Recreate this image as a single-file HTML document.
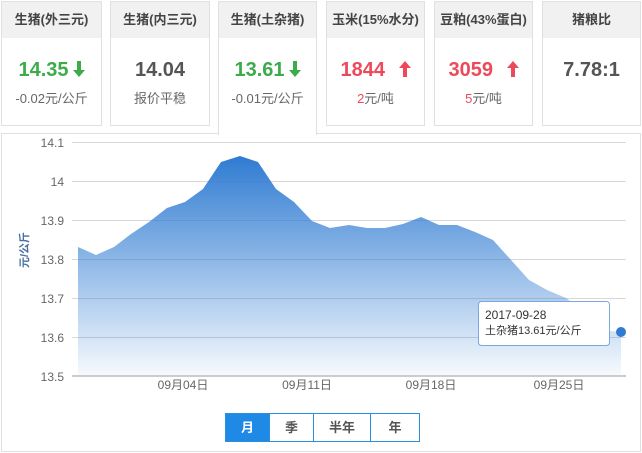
<!DOCTYPE html>
<html><head><meta charset="utf-8"><style>
body{margin:0;width:642px;height:453px;background:#fff;font-family:"Liberation Sans","Noto Sans CJK SC",sans-serif;position:relative;overflow:hidden}
.card{position:absolute;top:1px;height:123px;border:1px solid #e0e0e0;background:#fff;text-align:center}
.card .h{height:36px;background:#f1f1f1;line-height:36px;font-size:13px;font-weight:bold;color:#444}
.card .v{margin-top:20px;font-size:20px;font-weight:bold;line-height:24px}
.card .s{margin-top:6px;font-size:13px;color:#666}
.g{color:#3cab4a}.r{color:#ec4a5a}.d{color:#555}
.ar{display:inline-block;vertical-align:-1px;margin-left:4px}
.panel{position:absolute;left:1px;top:133px;width:638px;height:317px;border:1px solid #e0e0e0}
.btns{position:absolute;left:225px;top:413px;height:27px;border:1px solid #2b8fe0;display:flex;font-size:13px;font-weight:bold;color:#555}
.btns div{line-height:27px;text-align:center;border-left:1px solid #2b8fe0}
</style></head><body>
<div class="panel"></div>
<div class="card" style="left:1px;width:99px"><div class="h">生猪(外三元)</div><div class="v g">14.35<svg class="ar" width="12" height="16" viewBox="0 0 12 16"><path d="M4 0h4v9h4l-6 7-6-7h4z" fill="#3cab4a"/></svg></div><div class="s g">-0.02元/公斤</div></div>
<div class="card" style="left:110px;width:98px"><div class="h">生猪(内三元)</div><div class="v d">14.04</div><div class="s">报价平稳</div></div>
<div class="card" style="left:218px;width:97px;height:133px;border-bottom:none"><div class="h">生猪(土杂猪)</div><div class="v g">13.61<svg class="ar" width="12" height="16" viewBox="0 0 12 16"><path d="M4 0h4v9h4l-6 7-6-7h4z" fill="#3cab4a"/></svg></div><div class="s g">-0.01元/公斤</div></div>
<div class="card" style="left:326px;width:97px"><div class="h">玉米(15%水分)</div><div class="v r">1844 <svg class="ar" style="margin-left:8px" width="12" height="16" viewBox="0 0 12 16"><path d="M4 16h4v-9h4l-6-7-6 7h4z" fill="#ec4a5a"/></svg></div><div class="s"><span class="r">2</span>元/吨</div></div>
<div class="card" style="left:434px;width:97px"><div class="h">豆粕(43%蛋白)</div><div class="v r">3059 <svg class="ar" style="margin-left:8px" width="12" height="16" viewBox="0 0 12 16"><path d="M4 16h4v-9h4l-6-7-6 7h4z" fill="#ec4a5a"/></svg></div><div class="s"><span class="r">5</span>元/吨</div></div>
<div class="card" style="left:542px;width:97px"><div class="h">猪粮比</div><div class="v d">7.78:1</div></div>
<svg style="position:absolute;left:0;top:0" width="642" height="453">
<defs><linearGradient id="gr" x1="0" y1="0" x2="0" y2="1"><stop offset="0" stop-color="#2f7bd2"/><stop offset="1" stop-color="#2f7bd2" stop-opacity="0.04"/></linearGradient></defs>
<g stroke="#d8d8d8" stroke-width="1">
<line x1="72" x2="626" y1="142.5" y2="142.5"/><line x1="72" x2="626" y1="181.5" y2="181.5"/><line x1="72" x2="626" y1="220.5" y2="220.5"/><line x1="72" x2="626" y1="259.5" y2="259.5"/><line x1="72" x2="626" y1="298.5" y2="298.5"/><line x1="72" x2="626" y1="337.5" y2="337.5"/></g>
<path d="M78,247 L96,255 L114,247 L131,234 L149,222 L167,208 L185,202 L203,189 L221,162 L240,156 L258,162 L276,189 L294,202 L312,221 L330,228 L349,225 L367,228 L385,228 L403,224 L421,217 L439,225 L457,225 L475,232 L493,240 L511,260 L529,280 L547,290 L566,298 L590,316 L610,331 L621,332 L621,376 L78,376 Z" fill="url(#gr)"/>
<line x1="72" x2="626" y1="376" y2="376" stroke="#ccc" stroke-width="2"/>
<g font-size="12" fill="#666" text-anchor="end"><text x="64" y="147">14.1</text><text x="64" y="186">14</text><text x="64" y="225">13.9</text><text x="64" y="264">13.8</text><text x="64" y="303">13.7</text><text x="64" y="342">13.6</text><text x="64" y="381">13.5</text></g>
<g font-size="12" fill="#666" text-anchor="middle"><text x="183" y="389">09月04日</text><text x="307" y="389">09月11日</text><text x="431" y="389">09月18日</text><text x="559" y="389">09月25日</text></g>
<text x="28" y="250" font-size="11" fill="#4a6fa0" font-weight="bold" transform="rotate(-90 28 250)" text-anchor="middle">元/公斤</text>
<rect x="478.5" y="301.5" width="131" height="44" rx="3" fill="#fff" stroke="#7aa7de"/>
<text x="485" y="319" font-size="12" fill="#333">2017-09-28</text>
<text x="485" y="334" font-size="11" fill="#333">土杂猪13.61元/公斤</text>
<circle cx="621" cy="332" r="5" fill="#2f7bd2"/>
</svg>
<div class="btns"><div style="width:43px;border:none;background:#1e8ae6;color:#fff">月</div><div style="width:43px">季</div><div style="width:56px">半年</div><div style="width:48px">年</div></div>
</body></html>
